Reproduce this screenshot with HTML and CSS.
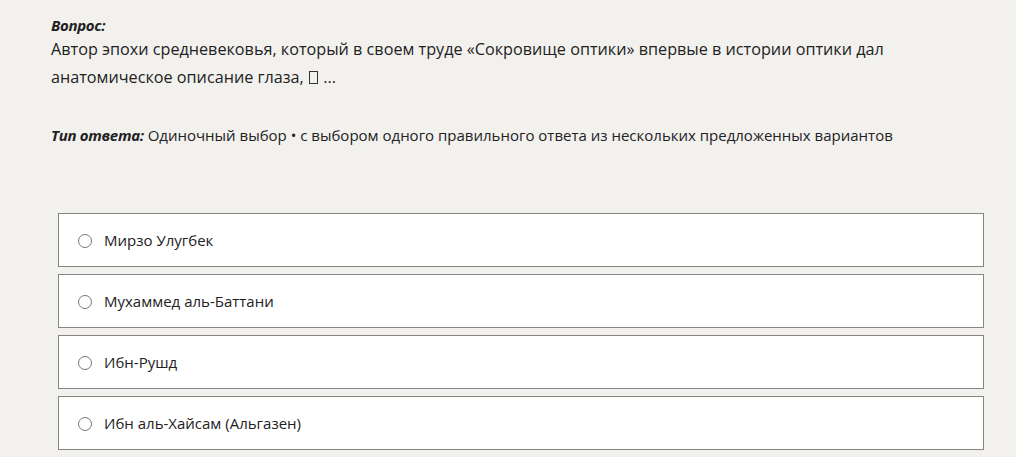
FILE: index.html
```html
<!DOCTYPE html>
<html lang="ru">
<head>
  <meta charset="UTF-8">
  <meta name="viewport" content="width=device-width, initial-scale=1.0">
  <title>Вопрос</title>
  <link rel="stylesheet" href="styles.css">
</head>
<body>
  <div class="question">
    <div class="label">Вопрос:</div>
    <p class="text">Автор эпохи средневековья, который в своем труде «Сокровище оптики» впервые в истории оптики дал анатомическое описание глаза, <span class="tofu"></span> ...</p>
    <p class="type"><span class="label">Тип ответа:</span> Одиночный выбор • с выбором одного правильного ответа из нескольких предложенных вариантов</p>
  </div>

  <form class="options">
    <label class="option"><input type="radio" name="answer"><span>Мирзо Улугбек</span></label>
    <label class="option"><input type="radio" name="answer"><span>Мухаммед аль-Баттани</span></label>
    <label class="option"><input type="radio" name="answer"><span>Ибн-Рушд</span></label>
    <label class="option"><input type="radio" name="answer"><span>Ибн аль-Хайсам (Альгазен)</span></label>
  </form>
</body>
</html>
```

FILE: styles.css
```css
body {
  margin: 0;
  background: #f2f1ee;
  color: #222;
  font-family: "Open Sans", "Noto Sans", sans-serif;
}
.question {
  padding: 15px 0 0 51px;
}
.label {
  font-weight: bold;
  font-style: italic;
  font-size: 15px;
  letter-spacing: -0.3px;
}
.text {
  margin: 0;
  font-size: 16.2px;
  line-height: 28px;
  width: 880px;
}
.tofu {
  display: inline-block;
  width: 7px;
  height: 11px;
  margin: 0 1px;
  border: 1px solid #333;
  vertical-align: -1px;
}
.type {
  margin: 34px 0 0;
  font-size: 15px;
}
.options {
  margin: 68px 32px 0 58px;
  display: flex;
  flex-direction: column;
  gap: 7px;
}
.option {
  display: flex;
  align-items: center;
  height: 52px;
  background: #fff;
  border: 1px solid #858585;
  font-size: 15px;
}
.option input {
  margin: 1px 12px 0 19px;
  width: 14px;
  height: 14px;
}
```
